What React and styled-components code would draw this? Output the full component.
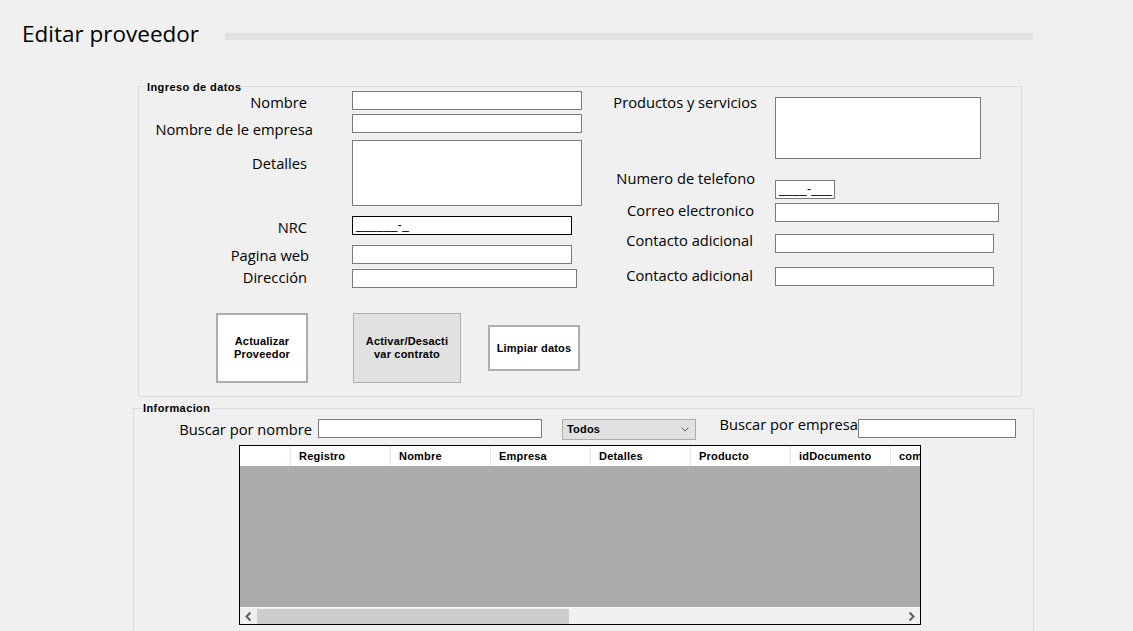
import React from "react";
import styled, { createGlobalStyle } from "styled-components";

const Global = createGlobalStyle`
  html, body { margin: 0; padding: 0; background: #f0f0f0; }
  body { font-family: "Open Sans", "Noto Sans", sans-serif; color: #000; }
  * { box-sizing: border-box; }
`;

const Page = styled.div`
  width: 1133px;
  height: 631px;
  overflow: hidden;
  background: #f0f0f0;
`;

const Header = styled.header`
  display: flex;
  align-items: flex-start;
  margin-top: 20px;
  padding-left: 22px;
  height: 28px;
`;

const Title = styled.h1`
  margin: 0;
  width: 203px;
  flex-shrink: 0;
  font-size: 22.5px;
  line-height: 28px;
  font-weight: 400;
  color: #000;
  white-space: nowrap;
`;

const TitleRule = styled.div`
  margin-top: 13px;
  width: 808px;
  height: 7px;
  background: #e1e1e1;
`;

const Group = styled.section`
  position: relative;
  margin-left: ${(p) => p.$left}px;
  margin-top: ${(p) => p.$top}px;
  width: ${(p) => p.$w}px;
  height: ${(p) => p.$h}px;
  border: 1px solid #dcdcdc;
`;

const Legend = styled.span`
  position: absolute;
  top: ${(p) => p.$top}px;
  left: ${(p) => p.$left}px;
  padding: 0 1px;
  background: #f0f0f0;
  font: bold 11px/13px "Liberation Sans", Arial, sans-serif;
  letter-spacing: 0.4px;
  white-space: nowrap;
`;

const Columns = styled.div`
  display: flex;
  align-items: flex-start;
  height: 201px;
`;

const Column = styled.div`
  display: flex;
  flex-direction: column;
  width: ${(p) => (p.$w ? `${p.$w}px` : "auto")};
  flex-shrink: 0;
`;

const Row = styled.div`
  display: flex;
  align-items: flex-start;
  height: ${(p) => p.$h}px;
  margin-top: ${(p) => p.$mt}px;
`;

const Label = styled.label`
  display: block;
  flex-shrink: 0;
  width: ${(p) => p.$w}px;
  padding-right: ${(p) => p.$pr || 0}px;
  margin-top: ${(p) => p.$dy || 0}px;
  text-align: right;
  font-size: 14.7px;
  line-height: 20px;
  white-space: nowrap;
  color: #000;
`;

const TextBox = styled.div`
  flex-shrink: 0;
  width: ${(p) => p.$w}px;
  height: ${(p) => p.$h || 19}px;
  background: #fff;
  border: 1px solid ${(p) => (p.$focus ? "#000" : "#7a7a7a")};
  padding-left: 3px;
  font: 12px/17px "Liberation Sans", Arial, sans-serif;
  letter-spacing: 0.3px;
  white-space: nowrap;
  overflow: hidden;
`;

const ButtonRow = styled.div`
  display: flex;
  align-items: flex-start;
  margin-top: 25px;
`;

const Button = styled.button`
  flex-shrink: 0;
  width: ${(p) => p.$w}px;
  height: ${(p) => p.$h}px;
  margin-left: ${(p) => p.$ml}px;
  margin-top: ${(p) => p.$mt || 0}px;
  padding: 0 2px;
  background: ${(p) => (p.$gray ? "#e1e1e1" : "#fff")};
  border: ${(p) => (p.$gray ? "1px" : "2px")} solid #adadad;
  font: bold 11px/13px "Liberation Sans", Arial, sans-serif;
  letter-spacing: 0.2px;
  color: #000;
  text-align: center;
`;

const SearchRow = styled.div`
  display: flex;
  align-items: flex-start;
  height: 21px;
  margin-top: 10px;
`;

const Combo = styled.div`
  flex-shrink: 0;
  display: flex;
  align-items: center;
  justify-content: space-between;
  width: 134px;
  height: 21px;
  margin-left: ${(p) => p.$ml}px;
  padding: 0 6px 0 4px;
  background: #e1e1e1;
  border: 1px solid #adadad;
  font: bold 11px/13px "Liberation Sans", Arial, sans-serif;
  letter-spacing: 0.2px;
`;

const Grid = styled.div`
  display: flex;
  flex-direction: column;
  width: 682px;
  height: 180px;
  margin-left: 105px;
  margin-top: 5px;
  border: 1px solid #000;
  background: #ababab;
  overflow: hidden;
`;

const GridHeader = styled.div`
  display: flex;
  height: 20px;
  flex-shrink: 0;
  background: #fff;
`;

const HeaderCell = styled.div`
  flex-shrink: 0;
  width: ${(p) => p.$w}px;
  border-left: ${(p) => (p.$first ? "none" : "1px solid #e3e3e3")};
  padding-left: 8px;
  font: bold 11px/20px "Liberation Sans", Arial, sans-serif;
  letter-spacing: 0.2px;
  white-space: nowrap;
  overflow: hidden;
`;

const GridBody = styled.div`
  flex: 1;
  background: #ababab;
`;

const HScroll = styled.div`
  display: flex;
  align-items: stretch;
  height: 17px;
  flex-shrink: 0;
  background: #f0f0f0;
  border-top: 1px solid #f7f7f7;
`;

const ScrollArrow = styled.div`
  width: 17px;
  flex-shrink: 0;
  display: flex;
  align-items: center;
  justify-content: center;
`;

const Track = styled.div`
  flex: 1;
  display: flex;
  align-items: center;
`;

const Thumb = styled.div`
  width: ${(p) => p.$w}px;
  height: 15px;
  background: #cdcdcd;
`;

const leftFields = [
  { label: "Nombre", pr: 45, dy: 1, mt: 4, h: 19, w: 230 },
  { label: "Nombre de le empresa", pr: 39, dy: 5, mt: 4, h: 19, w: 230 },
  { label: "Detalles", pr: 45, dy: 13, mt: 7, h: 66, w: 230 },
  { label: "NRC", pr: 45, dy: 1, mt: 10, h: 19, w: 220, focus: true, mask: "______-_" },
  { label: "Pagina web", pr: 43, dy: 0, mt: 10, h: 19, w: 220 },
  { label: "Dirección", pr: 45, dy: -2, mt: 5, h: 19, w: 225 },
];

const rightFields = [
  { label: "Productos y servicios", pr: 18, dy: -5, mt: 10, h: 62, w: 206 },
  { label: "Numero de telefono", pr: 20, dy: -12, mt: 21, h: 19, w: 60, mask: "____-___" },
  { label: "Correo electronico", pr: 21, dy: -3, mt: 4, h: 19, w: 224 },
  { label: "Contacto adicional", pr: 22, dy: -4, mt: 12, h: 19, w: 219 },
  { label: "Contacto adicional", pr: 22, dy: -2, mt: 14, h: 19, w: 219 },
];

const columns = [
  { name: "", w: 50 },
  { name: "Registro", w: 100 },
  { name: "Nombre", w: 100 },
  { name: "Empresa", w: 100 },
  { name: "Detalles", w: 100 },
  { name: "Producto", w: 100 },
  { name: "idDocumento", w: 100 },
  { name: "comentario", w: 100 },
];

const Chevron = ({ dir }) => (
  <svg width="17" height="17" viewBox="0 0 17 17">
    <polyline
      points={dir === "left" ? "10.5,4.5 6.5,8.5 10.5,12.5" : "6.5,4.5 10.5,8.5 6.5,12.5"}
      fill="none"
      stroke="#606060"
      strokeWidth="2"
    />
  </svg>
);

const DownChevron = () => (
  <svg width="8" height="5" viewBox="0 0 8 5">
    <polyline points="0.5,0.5 4,4 7.5,0.5" fill="none" stroke="#606060" strokeWidth="1" />
  </svg>
);

function FieldRow({ f, labelW }) {
  return (
    <Row $h={f.h} $mt={f.mt}>
      <Label $w={labelW} $pr={f.pr} $dy={f.dy}>
        {f.label}
      </Label>
      <TextBox $w={f.w} $h={f.h} $focus={f.focus}>
        {f.mask || ""}
      </TextBox>
    </Row>
  );
}

export default function App() {
  return (
    <Page>
      <Global />
      <Header>
        <Title>Editar proveedor</Title>
        <TitleRule />
      </Header>

      <Group $left={138} $top={38} $w={884} $h={311}>
        <Legend $top={-6} $left={7}>Ingreso de datos</Legend>
        <Columns>
          <Column $w={451}>
            {leftFields.map((f, i) => (
              <FieldRow key={i} f={f} labelW={213} />
            ))}
          </Column>
          <Column>
            {rightFields.map((f, i) => (
              <FieldRow key={i} f={f} labelW={185} />
            ))}
          </Column>
        </Columns>
        <ButtonRow>
          <Button $w={92} $h={70} $ml={77}>
            Actualizar
            <br />
            Proveedor
          </Button>
          <Button $w={108} $h={70} $ml={45} $gray>
            Activar/Desacti
            <br />
            var contrato
          </Button>
          <Button $w={92} $h={46} $ml={27} $mt={12}>
            Limpiar datos
          </Button>
        </ButtonRow>
      </Group>

      <Group $left={133} $top={11} $w={901} $h={240}>
        <Legend $top={-7} $left={8}>Informacion</Legend>
        <SearchRow>
          <Label $w={184} $pr={6} $dy={0}>
            Buscar por nombre
          </Label>
          <TextBox $w={224} $h={19} />
          <Combo $ml={20}>
            <span>Todos</span>
            <DownChevron />
          </Combo>
          <Label $w={162} $pr={0} $dy={-5}>
            Buscar por empresa
          </Label>
          <TextBox $w={158} $h={19} />
        </SearchRow>
        <Grid>
          <GridHeader>
            {columns.map((c, i) => (
              <HeaderCell key={i} $w={c.w} $first={i === 0}>
                {c.name}
              </HeaderCell>
            ))}
          </GridHeader>
          <GridBody />
          <HScroll>
            <ScrollArrow>
              <Chevron dir="left" />
            </ScrollArrow>
            <Track>
              <Thumb $w={312} />
            </Track>
            <ScrollArrow>
              <Chevron dir="right" />
            </ScrollArrow>
          </HScroll>
        </Grid>
      </Group>
    </Page>
  );
}
